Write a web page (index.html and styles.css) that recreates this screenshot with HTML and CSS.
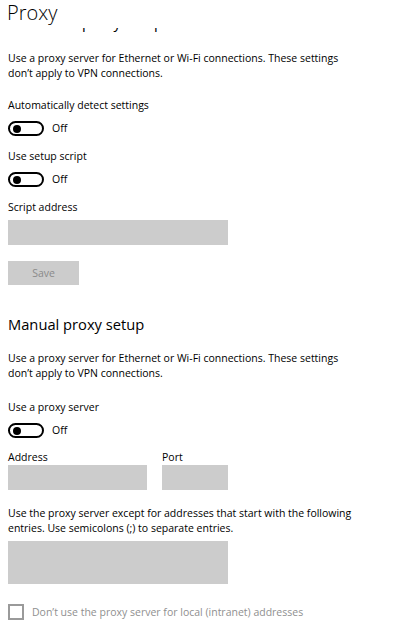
FILE: index.html
```html
<!DOCTYPE html>
<html>
<head>
<meta charset="utf-8">
<link rel="stylesheet" href="styles.css">
</head>
<body>
<div class="header"><h1 class="title">Proxy</h1></div>
<main class="content">
  <h2 class="section-title hidden-title">Automatic proxy setup</h2>
  <p class="desc desc-first">Use a proxy server for Ethernet or Wi-Fi connections. These settings don’t apply to VPN connections.</p>

  <div class="label label-first">Automatically detect settings</div>
  <div class="toggle-row"><span class="toggle"><span class="knob"></span></span><span class="toggle-text">Off</span></div>

  <div class="label">Use setup script</div>
  <div class="toggle-row"><span class="toggle"><span class="knob"></span></span><span class="toggle-text">Off</span></div>

  <div class="label">Script address</div>
  <div class="field field-wide"></div>

  <div class="button">Save</div>

  <h2 class="section-title manual-title">Manual proxy setup</h2>
  <p class="desc">Use a proxy server for Ethernet or Wi-Fi connections. These settings don’t apply to VPN connections.</p>

  <div class="label label-manual">Use a proxy server</div>
  <div class="toggle-row"><span class="toggle"><span class="knob"></span></span><span class="toggle-text">Off</span></div>

  <div class="addr-row">
    <div class="addr-col">
      <div class="label-tight">Address</div>
      <div class="field field-addr"></div>
    </div>
    <div class="addr-col">
      <div class="label-tight">Port</div>
      <div class="field field-port"></div>
    </div>
  </div>

  <p class="desc desc-except">Use the proxy server except for addresses that start with the following entries. Use semicolons (;) to separate entries.</p>
  <div class="field field-area"></div>

  <div class="check-row"><span class="checkbox"></span><span class="check-text">Don’t use the proxy server for local (intranet) addresses</span></div>
</main>
</body>
</html>
```
FILE: styles.css
```css
html, body {
  margin: 0;
  padding: 0;
  background: #ffffff;
}
body {
  font-family: "Open Sans", "Noto Sans", "Liberation Sans", sans-serif;
  font-size: 10.5px;
  color: #000000;
  width: 418px;
  height: 624px;
  overflow: hidden;
  position: relative;
}
.header {
  position: absolute;
  top: 0;
  left: 0;
  right: 0;
  height: 28px;
  background: #ffffff;
  z-index: 2;
}
.title {
  margin: 0;
  padding-left: 7px;
  font-size: 20px;
  font-weight: 300;
  line-height: 26px;
  color: #000000;
}
.content {
  padding: 11px 8px 0 8px;
}
.section-title {
  margin: 0;
  font-size: 14.7px;
  font-weight: 400;
  line-height: 22px;
  color: #000000;
}
.manual-title {
  margin-top: 28px;
}
.desc {
  margin: 16px 0 0 0;
  line-height: 15px;
  width: 350px;
}
.desc-first {
  margin-top: 18px;
}
.label {
  margin-top: 13px;
  line-height: 15px;
}
.label-first {
  margin-top: 17px;
}
.label-manual {
  margin-top: 19px;
}
.toggle-row {
  display: flex;
  align-items: center;
  gap: 8px;
  margin-top: 8px;
  height: 15px;
}
.toggle {
  box-sizing: border-box;
  width: 36px;
  height: 15px;
  border: 2px solid #000000;
  border-radius: 8px;
  display: flex;
  align-items: center;
  padding-left: 3px;
}
.knob {
  width: 8px;
  height: 8px;
  border-radius: 50%;
  background: #000000;
}
.toggle-text {
  line-height: 15px;
}
.field {
  background: #cccccc;
}
.field-wide {
  margin-top: 5px;
  width: 220px;
  height: 25px;
}
.button {
  margin-top: 16px;
  width: 71px;
  height: 24px;
  background: #cccccc;
  color: #8a8a8a;
  text-align: center;
  line-height: 24px;
}
.addr-row {
  display: flex;
  gap: 15px;
  margin-top: 12px;
}
.label-tight {
  line-height: 15px;
}
.field-addr {
  width: 139px;
  height: 25px;
}
.field-port {
  width: 66px;
  height: 25px;
}
.desc-except {
  margin-top: 16px;
}
.field-area {
  margin-top: 5px;
  width: 220px;
  height: 43px;
}
.check-row {
  display: flex;
  align-items: center;
  gap: 8px;
  margin-top: 20px;
}
.checkbox {
  box-sizing: border-box;
  width: 16px;
  height: 16px;
  border: 2px solid #9a9a9a;
}
.check-text {
  color: #8f8f8f;
  line-height: 16px;
}
```
